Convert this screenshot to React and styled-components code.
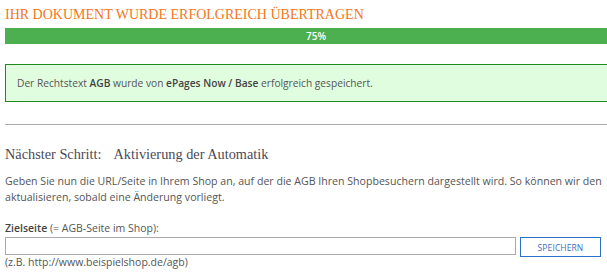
import React from 'react'
import styled, { createGlobalStyle } from 'styled-components'

const GlobalStyle = createGlobalStyle`
  html, body {
    margin: 0;
    padding: 0;
    background: #fff;
    overflow: hidden;
  }
  body {
    font-family: "Open Sans", "Liberation Sans", sans-serif;
    color: #555;
  }
`

const Page = styled.div`
  width: 640px;
  padding: 6px 0 0 5px;
`

const Title = styled.h1`
  margin: 0;
  font-family: "Liberation Serif", "DejaVu Serif", serif;
  font-weight: normal;
  font-size: 14px;
  line-height: 18px;
  color: #f37621;
`

const Progress = styled.div`
  margin-top: 4px;
  height: 16px;
  background: #4caf50;
  color: #fff;
  font-size: 10px;
  font-weight: 600;
  line-height: 16px;
  text-align: center;
  padding-right: 18px;
`

const Alert = styled.div`
  margin-top: 20px;
  height: 36px;
  border: 1px solid #1f8a1f;
  background: #e0fde0;
  display: flex;
  align-items: center;
  padding-left: 11px;
  font-size: 10.2px;
  color: #555;

  b {
    font-weight: 600;
    color: #444;
  }
`

const Divider = styled.hr`
  margin: 22px 0 0;
  border: 0;
  border-top: 1px solid #aaa;
`

const StepTitle = styled.h2`
  margin: 20px 0 0;
  font-family: "Liberation Serif", "DejaVu Serif", serif;
  font-weight: normal;
  font-size: 14.3px;
  line-height: 18px;
  color: #4a4a58;

  span {
    margin-left: 12px;
  }
`

const Text = styled.p`
  margin: 11px 0 0;
  width: 606px;
  font-size: 10.6px;
  line-height: 15.5px;
  color: #555;
`

const Label = styled.div`
  margin-top: 16px;
  font-size: 10.5px;
  line-height: 14px;
  color: #555;

  b {
    font-weight: 600;
    color: #444;
  }
`

const FormRow = styled.div`
  margin-top: 2px;
  display: flex;
  align-items: flex-start;
  gap: 4px;
  width: 596px;
`

const Input = styled.input`
  flex: 1;
  height: 18px;
  box-sizing: border-box;
  border: 1px solid #aaa;
  margin: 0;
  padding: 0 4px;
  font-family: inherit;
`

const Button = styled.button`
  width: 81px;
  height: 20px;
  box-sizing: border-box;
  border: 1px solid #2a72c8;
  background: #fff;
  color: #3a6fc0;
  font-family: "Open Sans", "Liberation Sans", sans-serif;
  font-size: 8.5px;
  letter-spacing: 0.1px;
  text-transform: uppercase;
  padding: 0;
`

const Hint = styled.div`
  margin-top: -2px;
  font-size: 10.5px;
  line-height: 14px;
  color: #555;
`

export default function App() {
  return (
    <>
      <GlobalStyle />
      <Page>
        <Title>IHR DOKUMENT WURDE ERFOLGREICH ÜBERTRAGEN</Title>
        <Progress>75%</Progress>
        <Alert>
          <div>
            Der Rechtstext <b>AGB</b> wurde von <b>ePages Now / Base</b> erfolgreich gespeichert.
          </div>
        </Alert>
        <Divider />
        <StepTitle>
          Nächster Schritt:<span>Aktivierung der Automatik</span>
        </StepTitle>
        <Text>
          Geben Sie nun die URL/Seite in Ihrem Shop an, auf der die AGB Ihren Shopbesuchern dargestellt wird. So können wir den
          aktualisieren, sobald eine Änderung vorliegt.
        </Text>
        <Label>
          <b>Zielseite</b> (= AGB-Seite im Shop):
        </Label>
        <FormRow>
          <Input type="text" />
          <Button>Speichern</Button>
        </FormRow>
        <Hint>(z.B. http://www.beispielshop.de/agb)</Hint>
      </Page>
    </>
  )
}
